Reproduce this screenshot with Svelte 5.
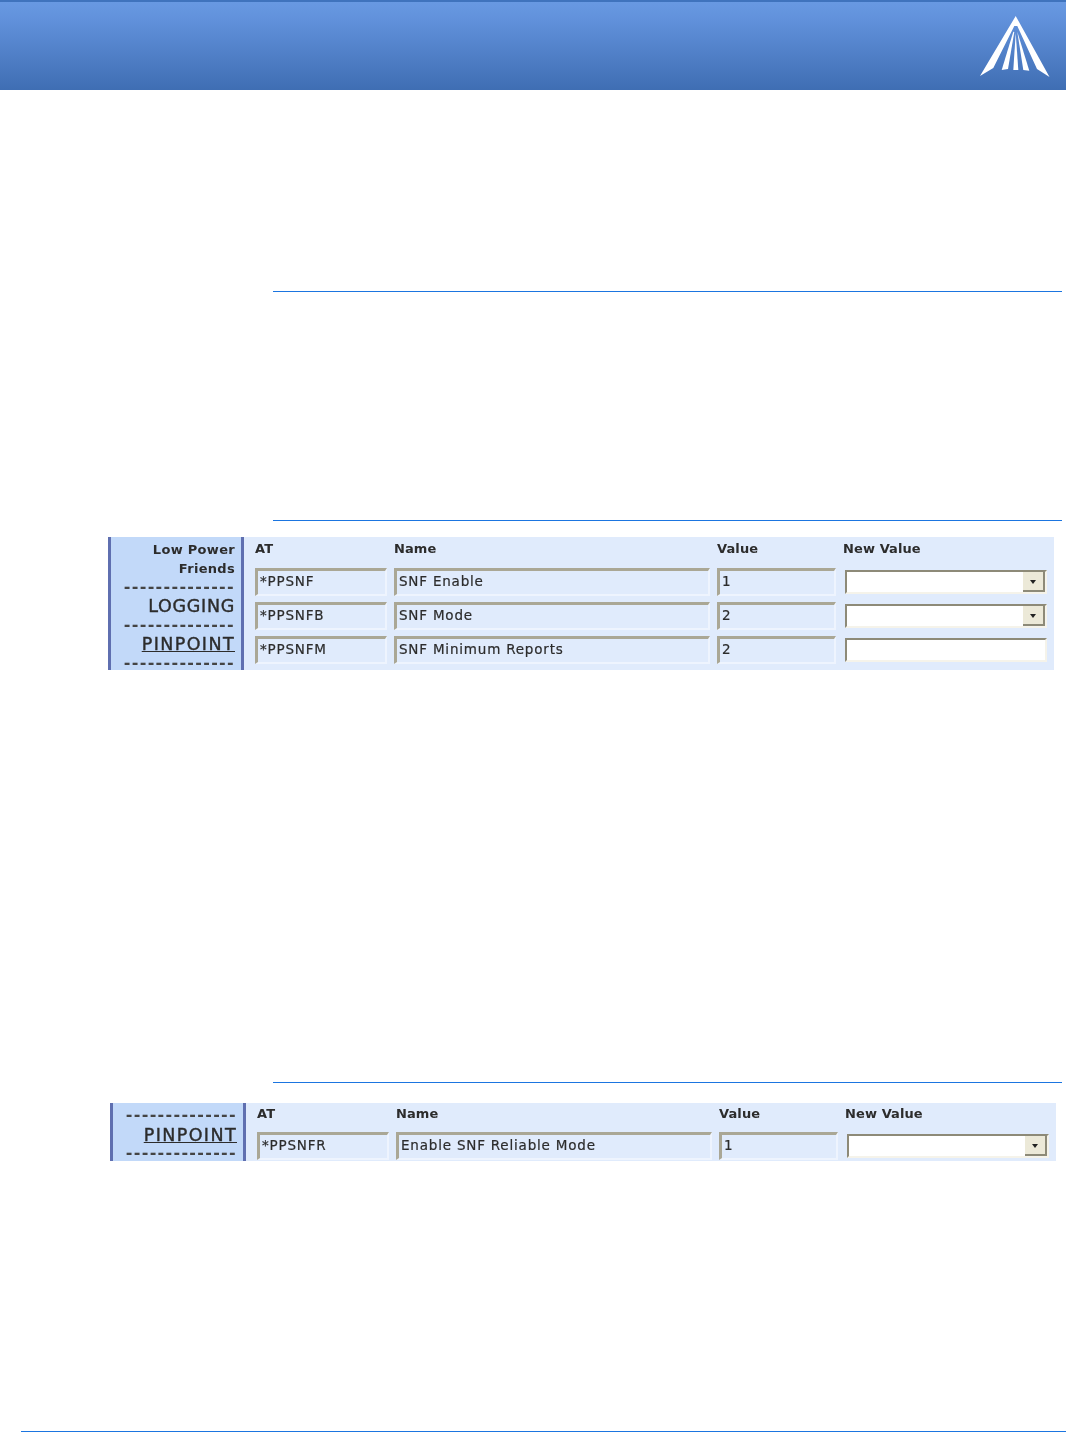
<script>
    const firstPanel = {
        labels: [
            { text: 'Low Power Friends', kind: 'small' },
            { text: 'LOGGING', kind: 'big' },
            { text: 'PINPOINT', kind: 'link' }
        ],
        rows: [
            { at: '*PPSNF', name: 'SNF Enable', value: '1', control: 'select' },
            { at: '*PPSNFB', name: 'SNF Mode', value: '2', control: 'select' },
            { at: '*PPSNFM', name: 'SNF Minimum Reports', value: '2', control: 'input' }
        ]
    };
    const secondPanel = {
        labels: [{ text: 'PINPOINT', kind: 'link' }],
        rows: [{ at: '*PPSNFR', name: 'Enable SNF Reliable Mode', value: '1', control: 'select' }]
    };
</script>

{#snippet panel(data, cls)}
    <div class="panel {cls}">
        <div class="side">
            {#if cls === 'second'}<div class="dashes">--------------</div>{/if}
            {#each data.labels as label}
                <div class={label.kind}>{label.text}</div>
                <div class="dashes">--------------</div>
            {/each}
        </div>
        <div class="main">
            <div class="row head">
                <div>AT</div>
                <div>Name</div>
                <div>Value</div>
                <div>New Value</div>
            </div>
            {#each data.rows as row}
                <div class="row">
                    <div class="field">{row.at}</div>
                    <div class="field">{row.name}</div>
                    <div class="field">{row.value}</div>
                    <div class="control">
                        {#if row.control === 'select'}
                            <span class="arrow"></span>
                        {/if}
                    </div>
                </div>
            {/each}
        </div>
    </div>
{/snippet}

<div class="page">
    <header>
        <svg class="logo" viewBox="0 0 70 62" width="70" height="62">
            <path d="M35.7 0 L69.5 61 L57 53 L37.3 10 L34.3 10 L13.3 52 L0 60 Z" fill="#fff" />
            <path d="M33.3 15.7 L21.7 54 L28 53 L34.3 16 Z" fill="#fff" />
            <path d="M35.7 17 L33.3 54 L38.3 54 Z" fill="#fff" />
            <path d="M37.3 15.7 L43.3 54 L49.3 54.7 Z" fill="#fff" />
        </svg>
    </header>

    <div class="rule one"></div>
    <div class="rule two"></div>
    {@render panel(firstPanel, 'first')}
    <div class="rule three"></div>
    {@render panel(secondPanel, 'second')}
    <div class="foot"></div>
</div>

<style>
    :global(body) {
        margin: 0;
        background: #fff;
    }
    .page {
        width: 1066px;
        height: 1432px;
        display: flex;
        flex-direction: column;
        font-family: "DejaVu Sans", Verdana, sans-serif;
        color: #2c2c2c;
        overflow: hidden;
    }
    header {
        height: 90px;
        box-sizing: border-box;
        border-top: 2px solid #3f73bd;
        background: linear-gradient(#6899e2, #6191db 20%, #3f6eb3);
        display: flex;
        justify-content: flex-end;
        align-items: flex-start;
        padding: 14px 16px 0 0;
    }
    .rule {
        height: 1px;
        background: #1b75e0;
        margin-left: 273px;
        margin-right: 4px;
    }
    .rule.one { margin-top: 201px; }
    .rule.two { margin-top: 228px; }
    .rule.three { margin-top: 412px; }
    .panel {
        width: 946px;
        display: flex;
        background: #e0ebfc;
        filter: blur(0.6px);
    }
    .first {
        height: 133px;
        margin: 16px 0 0 108px;
    }
    .second {
        height: 58px;
        margin: 20px 0 0 110px;
    }
    .side {
        width: 136px;
        box-sizing: border-box;
        flex: none;
        background: #c2d9f9;
        border-left: 3px solid #5f6fb0;
        border-right: 3px solid #5f6fb0;
        padding: 3px 6px 0 0;
        text-align: right;
    }
    .small {
        font-size: 13px;
        font-weight: bold;
        line-height: 19px;
        letter-spacing: 0.3px;
        width: 100px;
        margin-left: auto;
    }
    .big, .link {
        font-size: 17.5px;
        line-height: 20px;
        height: 20px;
        -webkit-text-stroke: 0.4px #2c2c2c;
    }
    .big { letter-spacing: 0.7px; }
    .link {
        text-decoration: underline;
        letter-spacing: 1.4px;
    }
    .second .link { padding-top: 1px; height: 19px; }
    .dashes {
        font-size: 16px;
        line-height: 18px;
        letter-spacing: 1.3px;
        font-weight: bold;
        color: #444;
    }
    .main {
        flex: 1;
        padding: 3px 5px 0 11px;
    }
    .second .main { padding-top: 2px; }
    .row {
        display: grid;
        grid-template-columns: 132px 316px 119px 204px;
        column-gap: 7px;
        height: 34px;
        font-size: 13.5px;
    }
    .head {
        height: 28px;
        font-size: 13px;
        font-weight: bold;
        line-height: 18px;
        letter-spacing: 0.1px;
        align-items: start;
    }
    .second .head { height: 27px; }
    .field {
        height: 28px;
        box-sizing: border-box;
        border: 2px solid #eef4fe;
        border-top: 3px solid #aaa795;
        border-left: 3px solid #aaa795;
        padding-left: 2px;
        line-height: 21px;
        letter-spacing: 0.8px;
        -webkit-text-stroke: 0.2px #2c2c2c;
    }
    .control {
        position: relative;
        height: 24px;
        margin: 2px 0 0 2px;
        box-sizing: border-box;
        background: #fff;
        border-top: 2px solid #8d8a78;
        border-left: 2px solid #8d8a78;
        border-right: 2px solid #f5f3ea;
        border-bottom: 2px solid #f5f3ea;
    }
    .arrow {
        position: absolute;
        right: 0;
        top: 0;
        width: 22px;
        height: 20px;
        box-sizing: border-box;
        background: #ece9d8;
        border-right: 2px solid #8d8a78;
        border-bottom: 2px solid #8d8a78;
    }
    .arrow::after {
        content: "";
        position: absolute;
        left: 7px;
        top: 8px;
        border: 3px solid transparent;
        border-top: 4px solid #222;
        border-bottom: 0;
    }
    .foot {
        height: 1px;
        background: #1b75e0;
        margin-left: 21px;
        margin-top: 270px;
    }
</style>
